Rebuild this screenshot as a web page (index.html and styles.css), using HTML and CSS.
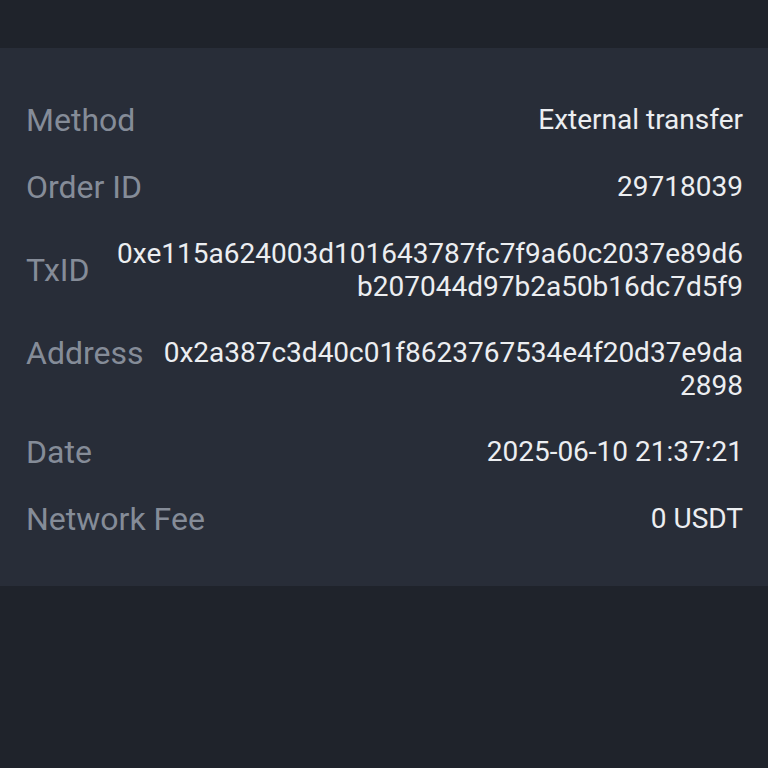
FILE: index.html
```html
<!DOCTYPE html>
<html>
<head>
  <title>Withdrawal Details</title>
  <link rel="stylesheet" href="styles.css">
</head>
<body>
  <div class="top-bar"></div>
  <div class="details">
    <div class="row">
      <span class="label">Method</span>
      <span class="value">External transfer</span>
    </div>
    <div class="row">
      <span class="label">Order ID</span>
      <span class="value">29718039</span>
    </div>
    <div class="row row-center">
      <span class="label">TxID</span>
      <span class="value hash">0xe115a624003d101643787fc7f9a60c2037e89d6b207044d97b2a50b16dc7d5f9</span>
    </div>
    <div class="row">
      <span class="label">Address</span>
      <span class="value hash">0x2a387c3d40c01f8623767534e4f20d37e9da2898</span>
    </div>
    <div class="row">
      <span class="label">Date</span>
      <span class="value">2025-06-10 21:37:21</span>
    </div>
    <div class="row">
      <span class="label">Network Fee</span>
      <span class="value">0 USDT</span>
    </div>
  </div>
</body>
</html>
```

FILE: styles.css
```css
body {
  margin: 0;
  padding: 0;
  background-color: #1f232b;
  font-family: Roboto, "Liberation Sans", sans-serif;
}

.top-bar {
  height: 48px;
}

.details {
  background-color: #282d38;
  padding: 55px 25px 50px 26px;
  display: flex;
  flex-direction: column;
  gap: 33px;
}

.row {
  display: flex;
  align-items: flex-start;
  justify-content: space-between;
  gap: 14px;
}

.row-center {
  align-items: center;
}

.label {
  flex-shrink: 0;
  color: #858c98;
  font-size: 32px;
  line-height: 34px;
}

.value {
  flex: 1;
  color: #eceef1;
  font-size: 28px;
  line-height: 33px;
  text-align: right;
}

.hash {
  word-break: break-all;
}
```
